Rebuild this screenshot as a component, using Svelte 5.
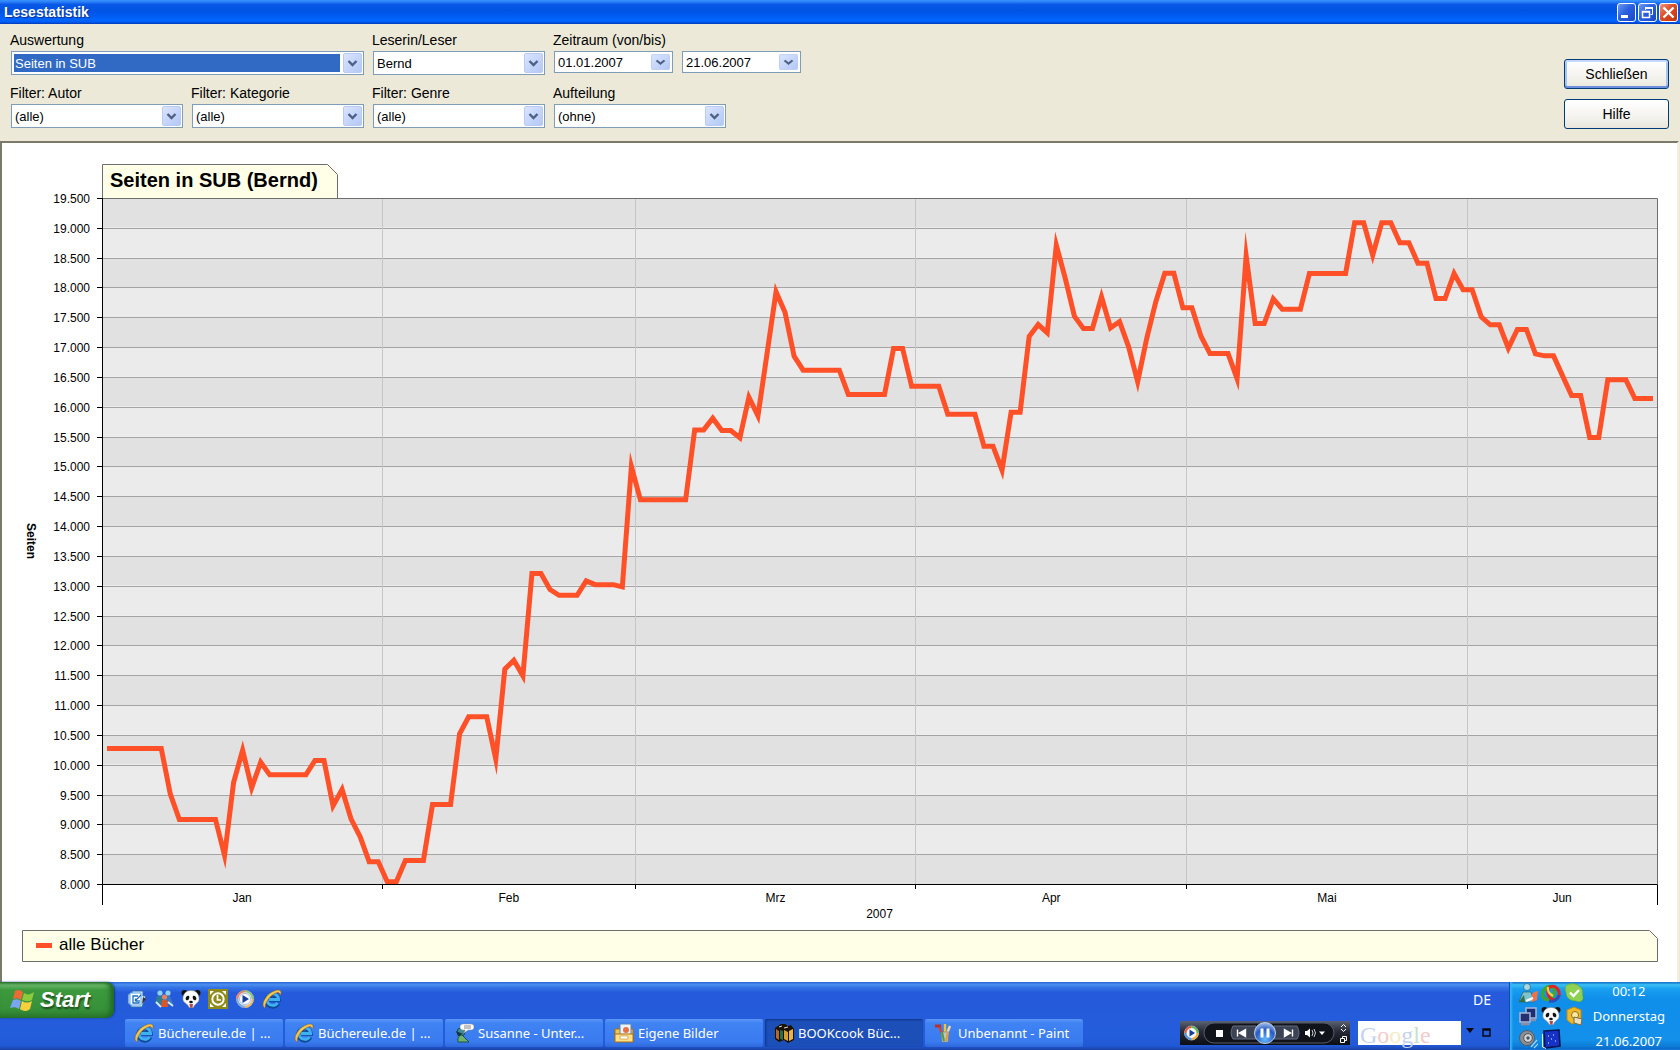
<script lang="ts">
	// [number of days, pages] runs, starting on 1 January
	const runs = [
		[7, 10280], [1, 9514], [5, 9090], [1, 8486], [1, 9710], [1, 10252], [1, 9620], [1, 10050],
		[5, 9838], [2, 10079], [1, 9319], [1, 9593], [1, 9095], [1, 8799], [2, 8380], [2, 8045],
		[3, 8402], [3, 9341], [1, 10526], [3, 10811], [1, 10101], [1, 11610], [1, 11760], [1, 11498],
		[2, 13215], [1, 12945], [3, 12847], [1, 13090], [3, 13027], [1, 12990], [1, 15007], [6, 14448],
		[2, 15621], [1, 15817], [2, 15610], [1, 15487], [1, 16169], [1, 15856], [1, 16896], [1, 17935],
		[1, 17588], [1, 16856], [5, 16622], [5, 16214], [2, 16985], [4, 16353], [4, 15884], [2, 15347],
		[1, 14945], [2, 15917], [1, 17186], [1, 17387], [1, 17247], [1, 18717], [1, 18158], [1, 17527],
		[2, 17320], [1, 17851], [1, 17331], [1, 17437], [1, 17013], [1, 16426], [1, 17152], [1, 17767],
		[2, 18248], [2, 17667], [1, 17192], [3, 16901], [1, 16477], [1, 18538], [2, 17404], [1, 17818],
		[3, 17645], [5, 18243], [2, 19092], [1, 18550], [2, 19092], [2, 18757], [2, 18416], [2, 17823],
		[1, 18243], [2, 17969], [1, 17516], [2, 17382], [1, 16991], [2, 17304], [1, 16896], [2, 16862],
		[1, 16527], [2, 16197], [2, 15493], [3, 16460], [3, 16147]
	];
	const values = runs.flatMap(([n, v]) => Array(n).fill(v));

	const months = [
		{ name: 'Jan', from: 0, to: 31 },
		{ name: 'Feb', from: 31, to: 59 },
		{ name: 'Mrz', from: 59, to: 90 },
		{ name: 'Apr', from: 90, to: 120 },
		{ name: 'Mai', from: 120, to: 151 },
		{ name: 'Jun', from: 151, to: 172 }
	];

	const min = 8000;
	const max = 19500;
	const step = 500;
	const steps = Array.from({ length: (max - min) / step + 1 }, (_, i) => min + i * step);

	let w = $state(1674);
	let h = $state(839);

	const left = 100;
	const top = 55;
	const right = $derived(w - 20);
	const bottom = $derived(h - 98);
	const midX = $derived((left + right) / 2);

	const x = (day: number) => left + (day / values.length) * (right - left);
	const y = (v: number) => bottom - ((v - min) / (max - min)) * (bottom - top);
	// lines sit on pixel centres
	const px = (n: number) => Math.floor(n) + 0.5;

	const points = $derived(values.map((v, i) => `${x(i + 0.5) + 0.5},${y(v) + 0.5}`).join(' '));

	const label = (v: number) => `${Math.floor(v / 1000)}.${String(v % 1000).padStart(3, '0')}`;

	const filters = [
		{ id: 'autor', label: 'Filter: Autor', value: '(alle)' },
		{ id: 'kategorie', label: 'Filter: Kategorie', value: '(alle)' },
		{ id: 'genre', label: 'Filter: Genre', value: '(alle)' },
		{ id: 'aufteilung', label: 'Aufteilung', value: '(ohne)' }
	];

	const tasks = [
		{ icon: 'ie', text: 'Büchereule.de | ...' },
		{ icon: 'ie', text: 'Büchereule.de | ...' },
		{ icon: 'chat', text: 'Susanne - Unter...' },
		{ icon: 'folder', text: 'Eigene Bilder' },
		{ icon: 'books', text: 'BOOKcook Büc...', active: true },
		{ icon: 'paint', text: 'Unbenannt - Paint' }
	];

	const quick = ['desktop', 'people', 'panda', 'clock', 'player', 'ie'];
	const tray = ['person', 'rings', 'check', 'network', 'panda', 'key', 'speaker', 'screen'];
</script>

{#snippet arrow()}
	<svg class="arrow" viewBox="0 0 19 20" preserveAspectRatio="none" aria-hidden="true">
		<rect x="0.5" y="0.5" width="18" height="19" rx="1.5" fill="url(#arrow-bg)" stroke="#b9cbf5" />
		<path d="M5.5 8 L9.5 12 L13.5 8" fill="none" stroke="#4d6185" stroke-width="2.4" />
	</svg>
{/snippet}

{#snippet icon(name: string)}
	<svg class="icon" viewBox="0 0 20 20" aria-hidden="true">
		{#if name === 'ie'}
			<path d="M16 14 A6 6 0 1 1 16.5 10.5 H7" fill="none" stroke="#0b4a94" stroke-width="4.4" />
			<path d="M15.5 13.8 A5.800 5.800 0 1 1 16.5 10.5 H7" fill="none" stroke="#3fb0f2" stroke-width="3" />
			<path d="M3 19 C-2.500 16 4.500 4 13.5 1.5 C18.500 0 20.500 2.500 18 6.5 C18 3.500 16.5 3 14 4 C8 6.500 3 13 3 19Z" fill="#f6c64f" stroke="#8a5c1a" stroke-width="0.5" />
		{:else if name === 'desktop'}
			<path d="M5 2 H16 V7 H19 L15 18 H4 V15 H1 V5 H5Z" fill="#dceafb" stroke="#2c6db5" />
			<path d="M3 4 H14 V16 H3Z" fill="#fff" stroke="#5aa5e8" />
			<path d="M11 7 H6 V14 H12 V11 M8 12 L14 6 M8.500 12 V9.500 M8.500 12 H11" fill="none" stroke="#1f6fc0" stroke-width="1.300" />
			<path d="M16 8 L19 10 L15 15Z" fill="#333" />
		{:else if name === 'people'}
			<circle cx="6" cy="4" r="2.6" fill="#8fd2ee" />
			<circle cx="14" cy="4" r="2.6" fill="#8fd2ee" />
			<path d="M1 14 L3 7 H9 L10 16Z" fill="#2d7d96" />
			<path d="M19 15 L16 7 H11 L10 16Z" fill="#3c78c8" />
			<circle cx="10.5" cy="8" r="2.6" fill="#e9825a" />
			<path d="M7 18 L8 11 H13 L14 18Z" fill="#df5424" />
			<path d="M2 13 L7 18 M14 13 L19 17" stroke="#cce8f5" stroke-width="2" />
		{:else if name === 'panda'}
			<circle cx="3.5" cy="4" r="3" fill="#111" />
			<circle cx="16.5" cy="4" r="3" fill="#111" />
			<path d="M10 1.5 C16 1.5 18.5 6 18 11 C17.5 14 13 15 12.5 18.5 H8 C7.5 15 2.5 14 2 11 C1.5 6 4 1.5 10 1.5Z" fill="#fafafa" stroke="#8b8b8b" stroke-width="0.5" />
			<ellipse cx="6.5" cy="9" rx="1.7" ry="2.4" fill="#111" transform="rotate(25 6.5 9)" />
			<ellipse cx="13.5" cy="9" rx="1.7" ry="2.4" fill="#111" transform="rotate(-25 13.5 9)" />
			<ellipse cx="10" cy="13" rx="1.8" ry="1.3" fill="#111" />
			<path d="M8.5 15 H12 L11.5 18.5 H9Z" fill="#b34a4a" />
		{:else if name === 'clock'}
			<rect width="20" height="20" fill="#8f8a18" />
			<path d="M2 6 L2 2 H6Z M14 2 H18 V6Z M18 14 V18 H14Z M6 18 H2 V14Z" fill="#fff" />
			<circle cx="10" cy="10" r="5.700" fill="#8f8a18" stroke="#fff" stroke-width="2" />
			<path d="M9.5 6 V11 H13" fill="none" stroke="#fff" stroke-width="1.700" />
		{:else if name === 'player'}
			<circle cx="10" cy="10" r="8.7" fill="#e9edf4" stroke="#8b9cb5" stroke-width="0.6" />
			<path d="M10 2.3 A7.7 7.7 0 0 0 2.3 10" fill="none" stroke="#e9836c" stroke-width="2" />
			<path d="M10 2.3 A7.7 7.7 0 0 1 17.7 10" fill="none" stroke="#8cc67c" stroke-width="2" />
			<path d="M17.7 10 A7.7 7.7 0 0 1 10 17.7" fill="none" stroke="#f0b758" stroke-width="2" />
			<path d="M10 17.7 A7.7 7.7 0 0 1 2.3 10" fill="none" stroke="#78a9e2" stroke-width="2" />
			<circle cx="10" cy="10" r="5.6" fill="#f7fbff" stroke="#aac2e2" />
			<path d="M7.5 6 L14 10 L7.5 14Z" fill="#173c9c" />
		{:else if name === 'chat'}
			<circle cx="7" cy="9" r="4" fill="#3f8d93" stroke="#164b58" />
			<path d="M4 19 C3 14 6 12 8 12 L15 19Z" fill="#6db36d" stroke="#1b5147" />
			<path d="M2 8 L9 11 L4 13Z" fill="#17363b" />
			<path d="M9 1 H17 Q20 1 20 4 Q20 7 17 7 H14 L10 10 L11 7 H9 Q6 7 6 4 Q6 1 9 1Z" fill="#fff" stroke="#999" stroke-width="0.5" />
			<path d="M10 3 H17 M10 5 H17" stroke="#666" stroke-width="0.8" />
		{:else if name === 'folder'}
			<path d="M1 6 H6 V2 H17 V6 H19 V18 H1Z" fill="#f2c64c" stroke="#a76f11" />
			<path d="M6 1 H17 V12 H6Z" fill="#e7f3fd" stroke="#5a85b6" />
			<circle cx="12" cy="7" r="3" fill="#e77146" />
			<path d="M1 11 H19 V19 H1Z" fill="#ffe086" stroke="#a76f11" />
			<path d="M6 13 H14 V16 H6Z" fill="#fff" stroke="#b8892d" stroke-width="0.6" />
		{:else if name === 'books'}
			<path d="M1 5 L7 1 H11 L14 3 L17 2 L20 6 V17 L14 20 L10 17 L5 19 L1 16Z" fill="#1b1205" />
			<path d="M2 6 L5 8 V17 L2 15Z" fill="#b4682a" />
			<path d="M6 7 L9 8 V17 L6 16Z" fill="#26704e" />
			<path d="M10 7 L14 9 V18 L10 16Z" fill="#d6a12f" />
			<path d="M15 8 L19 6 V16 L15 18Z" fill="#e5b54a" />
			<path d="M5 4 L8 3 M10 5 L14 4" stroke="#ddd" />
		{:else if name === 'paint'}
			<path d="M5 3 L9 13" stroke="#d94327" stroke-width="2.4" />
			<path d="M11 1 V13" stroke="#f1c232" stroke-width="2.4" />
			<path d="M16 3 L12 13" stroke="#f0d9a0" stroke-width="2.4" />
			<path d="M7 9 H15 L14 19 H8Z" fill="#b9c7c9" stroke="#6c7680" stroke-width="0.6" />
			<path d="M8 9 L10 18" stroke="#4d9b46" stroke-width="2" />
			<path d="M14 9 L12 18" stroke="#e89a2b" stroke-width="2" />
			<path d="M1 3 H7" stroke="#b3322a" stroke-width="3" />
		{:else if name === 'person'}
			<circle cx="9" cy="4" r="3.5" fill="#a5d7e6" stroke="#246078" stroke-width="0.7" />
			<path d="M1 19 L5 9 H13 L16 19Z" fill="#7dc4cf" stroke="#246078" stroke-width="0.7" />
			<path d="M1 19 L6 12 L7 19Z" fill="#356f42" />
			<path d="M14 19 V11 L16 9 L20 8 L19 17Z" fill="#ee7348" />
			<path d="M8 18 L15 15" stroke="#fff" stroke-width="2" />
		{:else if name === 'rings'}
			<ellipse cx="7.5" cy="10" rx="5.500" ry="7" fill="none" stroke="#3fa535" stroke-width="3.4" transform="rotate(35 7.5 10)" />
			<ellipse cx="12.5" cy="10" rx="5.500" ry="7" fill="none" stroke="#d92727" stroke-width="3" transform="rotate(-20 12.5 10)" />
			<path d="M18 12 A8 8 0 0 1 8 18" fill="none" stroke="#2b4fbb" stroke-width="3" />
			<path d="M7 4 C6 9 9 11 12 13" fill="none" stroke="#eed33b" stroke-width="2.400" />
		{:else if name === 'check'}
			<path d="M6 1 C8 0 13 1 15 3 C20 6 18 10 19 14 C20 18 15 20 12 18 C6 18 2 15 2 9 C0 5 2 1 6 1Z" fill="#8ed052" stroke="#5ea62d" stroke-width="0.6" />
			<path d="M6 9.5 L9.5 13 L15 7" fill="none" stroke="#fff" stroke-width="2.4" />
		{:else if name === 'network'}
			<path d="M8 2 H18 V12 H8Z" fill="#1d2f74" stroke="#a9b6d4" stroke-width="1.500" />
			<path d="M2 7 H12 V16 H2Z" fill="#253070" stroke="#a9b6d4" stroke-width="1.500" />
			<path d="M3 18 H12 M13 14 H18" stroke="#888eaa" stroke-width="2.4" />
		{:else if name === 'key'}
			<path d="M3 4 L10 1 L17 4 V15 L8 18 L3 14Z" fill="#f0b926" stroke="#b98a20" />
			<circle cx="11" cy="9" r="3.500" fill="#ffe9a1" stroke="#8b6f26" />
			<path d="M10 11 L18 13 L17 19 L10 17Z" fill="#e8e0c0" stroke="#7a6a40" />
		{:else if name === 'speaker'}
			<circle cx="9" cy="9" r="7.5" fill="#8a8d92" stroke="#545d65" />
			<circle cx="10" cy="9" r="4.3" fill="#d1d6da" stroke="#4b5359" />
			<circle cx="10" cy="9" r="1.7" fill="#4b5359" />
			<path d="M13 18 L19 11 M16 19 L20 15" stroke="#9ed7ff" stroke-width="1.2" />
		{:else if name === 'screen'}
			<path d="M3 2 L18 1 L19 17 L4 19Z" fill="#1533c8" stroke="#071556" stroke-width="1.6" />
			<path d="M1.5 5 V18 L5 19.500" fill="none" stroke="#e8f2ff" />
			<path d="M7 7 H8 M12 6 H13 M10 10 H11 M14 12 H15 M7 14 H8" stroke="#fff" stroke-width="1.2" />
		{/if}
	</svg>
{/snippet}

<svg class="defs" aria-hidden="true">
	<defs>
		<linearGradient id="arrow-bg" x1="0" y1="0" x2="1" y2="1">
			<stop offset="0" stop-color="#dbe5fe" />
			<stop offset="1" stop-color="#b2c7f6" />
		</linearGradient>
	</defs>
</svg>

<div class="desktop">
	<header class="titlebar">
		<h1>Lesestatistik</h1>
		<div class="window-buttons">
			<button aria-label="Minimieren">
				<svg viewBox="0 0 17 17"><path d="M3 12.5 H10" stroke="#fff" stroke-width="3" /></svg>
			</button>
			<button aria-label="Wiederherstellen">
				<svg viewBox="0 0 17 17" fill="none" stroke="#fff">
					<path d="M6.5 6 V3.5 H13.5 V10.5 H11.5" />
					<path d="M6 4 H14" stroke-width="2" />
					<path d="M3.500 7.5 H10.500 V13.5 H3.500Z M3 8 H11" stroke-width="1.5" />
				</svg>
			</button>
			<button class="close" aria-label="Fenster schließen">
				<svg viewBox="0 0 17 17"><path d="M3.5 3.5 L13.5 13.5 M13.5 3.5 L3.5 13.5" stroke="#fff" stroke-width="2.4" /></svg>
			</button>
		</div>
	</header>

	<form class="toolbar" onsubmit={(e) => e.preventDefault()}>
		<div class="fields">
			<div class="field wide">
				<label for="auswertung">Auswertung</label>
				<div class="combo">
					<select id="auswertung" class="selected"><option>Seiten in SUB</option></select>
					{@render arrow()}
				</div>
			</div>
			<div class="field">
				<label for="leser">Leserin/Leser</label>
				<div class="combo">
					<select id="leser"><option>Bernd</option></select>
					{@render arrow()}
				</div>
			</div>
			<div class="field range">
				<label for="von">Zeitraum (von/bis)</label>
				<div class="dates">
					<div class="combo date">
						<input id="von" type="text" value="01.01.2007" />
						{@render arrow()}
					</div>
					<div class="combo date">
						<input type="text" value="21.06.2007" aria-label="Zeitraum bis" />
						{@render arrow()}
					</div>
				</div>
			</div>
			{#each filters as f (f.id)}
				<div class="field">
					<label for={f.id}>{f.label}</label>
					<div class="combo">
						<select id={f.id}><option>{f.value}</option></select>
						{@render arrow()}
					</div>
				</div>
			{/each}
		</div>
		<div class="actions">
			<button class="push default">Schließen</button>
			<button class="push">Hilfe</button>
		</div>
	</form>

	<main class="panel">
		<div class="chart" bind:clientWidth={w} bind:clientHeight={h}>
			<svg width={w} height={h} role="img" aria-label="Seiten in SUB (Bernd)">
				{#each steps.slice(1) as v, i (v)}
					<rect
						x={left}
						y={px(y(v))}
						width={right - left}
						height={px(y(v - step)) - px(y(v))}
						fill={i % 2 ? '#ebebeb' : '#e1e1e1'}
					/>
				{/each}
				{#each steps.slice(1, -1) as v (v)}
					<line class="grid" x1={left} x2={right} y1={px(y(v) + 0.5)} y2={px(y(v) + 0.5)} />
				{/each}
				{#each months.slice(1) as m (m.name)}
					<line class="grid-month" x1={px(x(m.from))} x2={px(x(m.from))} y1={top} y2={bottom} />
					<line class="axis" x1={px(x(m.from))} x2={px(x(m.from))} y1={bottom} y2={bottom + 5} />
				{/each}

				<path class="tab" d="M{px(left)} {px(top)} V{px(top - 34)} h225 l10 10 V{px(top)}" />
				<text class="title" x={left + 8} y={top - 11}>Seiten in SUB (Bernd)</text>

				<polyline class="series" {points} />

				<path class="frame" d="M{left} {px(top)} H{px(right)} V{bottom}" />
				<path class="axis" d="M{px(left)} {top} V{bottom + 21} M{left} {px(bottom)} H{px(right)} V{bottom + 21}" />
				{#each steps as v (v)}
					<line class="axis" x1={left - 5} x2={left} y1={px(y(v) + 0.5)} y2={px(y(v) + 0.5)} />
					<text class="tick" x={left - 12} y={Math.round(y(v)) + 5} text-anchor="end">{label(v)}</text>
				{/each}
				{#each months as m (m.name)}
					<text class="tick" x={x((m.from + m.to) / 2)} y={bottom + 18} text-anchor="middle">{m.name}</text>
				{/each}
				<text class="tick" x={midX} y={bottom + 34} text-anchor="middle">2007</text>
				<text
					class="unit"
					transform="translate(25 {(top + bottom) / 2}) rotate(90)"
					text-anchor="middle">Seiten</text
				>

				<path class="tab" d="M20.5 {bottom + 46.5} H{right - 7.5} l8 8 V{bottom + 77.5} H20.5Z" />
				<rect x="34" y={bottom + 59} width="16" height="5" fill="#ff5028" />
				<text class="legend" x="57" y={bottom + 66}>alle Bücher</text>
			</svg>
		</div>
	</main>

	<footer class="taskbar">
		<div class="start-cell">
			<button class="start">
				<svg viewBox="0 0 24 24" aria-hidden="true">
					<path d="M5 3 C8 1 10 2 13 4 L11 12 C8 10 6 10 3 11Z" fill="#ee6a34" />
					<path d="M14 5 C17 7 20 7 24 4 L22 12 C18 14 15 13 12 12Z" fill="#8ccb3c" />
					<path d="M3 12 C6 11 8 11 11 13 L9 21 C6 19 4 19 0 20Z" fill="#7ba4f4" />
					<path d="M12 13 C15 15 18 15 22 13 L20 21 C17 24 12 23 10 21Z" fill="#f8cf3c" />
				</svg>
				Start
			</button>
		</div>
		<div class="bands">
			<div class="quick">
				{#each quick as name (name)}
					<button aria-label={name}>{@render icon(name)}</button>
				{/each}
				<span class="lang">DE</span>
			</div>
			<div class="tasks">
				{#each tasks as t}
					<button class="task" class:active={t.active}>
						{@render icon(t.icon)}<span>{t.text}</span>
					</button>
				{/each}
				<div class="player">
					<svg viewBox="0 0 170 24" aria-hidden="true">
						<defs>
							<linearGradient id="player-bg" x1="0" y1="0" x2="0" y2="1">
								<stop offset="0" stop-color="#5b6273" />
								<stop offset="0.45" stop-color="#262a35" />
								<stop offset="1" stop-color="#0c0e14" />
							</linearGradient>
							<radialGradient id="pause-bg" cx="0.5" cy="0.8" r="0.8">
								<stop offset="0" stop-color="#62b8fa" />
								<stop offset="0.6" stop-color="#2a5bc4" />
								<stop offset="1" stop-color="#a9c5ee" />
							</radialGradient>
						</defs>
						<rect width="170" height="24" fill="url(#player-bg)" />
						<rect x="24" y="2" width="130" height="20" rx="10" fill="#11131a" stroke="#555c6b" />
						<circle cx="11.5" cy="12" r="7" fill="#f4f7fb" stroke="#9bb0cc" />
						<path d="M11.5 6 A6 6 0 0 0 5.5 12" fill="none" stroke="#e8553a" stroke-width="2" />
						<path d="M11.5 6 A6 6 0 0 1 17.5 12" fill="none" stroke="#63b74c" stroke-width="2" />
						<path d="M17.5 12 A6 6 0 0 1 11.5 18" fill="none" stroke="#f0ad35" stroke-width="2" />
						<path d="M5.5 12 A6 6 0 0 0 11.5 18" fill="none" stroke="#4f94df" stroke-width="2" />
						<path d="M9.5 8.5 L15 12 L9.5 15.5Z" fill="#173c9c" />
						<rect x="36" y="9" width="7" height="7" fill="#fff" />
						<path d="M53 5 H76 V18 H53 Q49 12 53 5Z M94 5 H117 Q121 12 117 18 H94Z" fill="#3b4354" stroke="#656e80" />
						<path d="M57.5 8.5 V15.5 M65.5 8.5 L59.5 12 L65.5 15.5Z" fill="#fff" stroke="#fff" stroke-width="1.4" />
						<path d="M112.5 8.5 V15.5 M104.5 8.5 L110.5 12 L104.5 15.5Z" fill="#fff" stroke="#fff" stroke-width="1.4" />
						<circle cx="85" cy="12" r="10.5" fill="url(#pause-bg)" stroke="#b9cdec" />
						<path d="M82 7.5 V16.5 M88 7.5 V16.5" stroke="#fff" stroke-width="3" />
						<path d="M125 10 H127 L130 7.5 V16.5 L127 14 H125Z" fill="#fff" />
						<path d="M132 9 Q134 12 132 15 M134 8 Q137 12 134 16" fill="none" stroke="#ccc" />
						<path d="M139 10.5 H145 L142 14Z" fill="#fff" />
						<path d="M161 6 L163.5 3.5 L166 6 M161 8 L163.5 10.5 L166 8" fill="none" stroke="#fff" />
						<path d="M160.5 17.5 H164.5 V21.5 H160.5Z M162.5 17 V15.5 H166.5 V19.5 H165" fill="none" stroke="#fff" />
					</svg>
				</div>
				<div class="search">
					<input type="text" aria-label="Google" />
					<span class="google" aria-hidden="true"
						><b>G</b><b>o</b><b>o</b><b>g</b><b>l</b><b>e</b></span
					>
				</div>
				<svg class="search-tools" viewBox="0 0 26 16" aria-hidden="true">
					<path d="M1 3 H9 L5 8Z" fill="#06070c" />
					<path d="M18 4 H25 V11 H18Z M18 5 H25" fill="none" stroke="#06070c" stroke-width="1.4" />
				</svg>
			</div>
		</div>
		<div class="tray">
			<div class="tray-icons">
				{#each tray as name (name)}
					{@render icon(name)}
				{/each}
			</div>
			<div class="clock">
				<span>00:12</span>
				<span>Donnerstag</span>
				<span>21.06.2007</span>
			</div>
		</div>
	</footer>
</div>

<style>
	:global(body) {
		background: #ece9d8;
	}

	button,
	select,
	input {
		margin: 0;
		padding: 0;
		border: 0;
		font: inherit;
		color: inherit;
	}

	.defs {
		position: absolute;
		width: 0;
		height: 0;
	}

	.desktop {
		display: flex;
		flex-direction: column;
		height: 100vh;
		min-height: 600px;
		font-family: 'Liberation Sans', Arial, sans-serif;
		font-size: 14px;
		color: #000;
	}

	.titlebar {
		display: flex;
		align-items: center;
		justify-content: space-between;
		height: 24px;
		padding: 0 2px 0 4px;
		box-sizing: border-box;
		background: linear-gradient(#3a94ff 0, #2a80f8 8%, #0a58e6 18%, #0054e3 45%, #0058ee 60%, #0066ff 85%, #0059f0 92%, #003bb8 100%);
	}

	.titlebar h1 {
		margin: 0;
		font-size: 14px;
		line-height: 24px;
		color: #fff;
		text-shadow: 1px 1px 1px #0a2f8c;
	}

	.window-buttons {
		display: flex;
		gap: 2px;
	}

	.window-buttons button {
		width: 19px;
		height: 19px;
		border: 1px solid #fff;
		border-radius: 3px;
		background: linear-gradient(135deg, #6d9cf5, #2a5fe0 45%, #1a48c8);
	}

	.window-buttons .close {
		background: linear-gradient(135deg, #f0957a, #dd4d26 45%, #bf3410);
	}

	.window-buttons svg {
		display: block;
		width: 17px;
		height: 17px;
	}

	.toolbar {
		display: flex;
		justify-content: space-between;
		padding: 8px 11px 12px 10px;
		background: #ece9d8;
	}

	.fields {
		display: grid;
		grid-template-columns: repeat(4, 173px) 68px;
		align-content: start;
		gap: 10px 8px;
		margin-bottom: 1px;
	}

	.wide,
	.range {
		grid-column: span 2;
	}

	label {
		display: block;
		line-height: 17px;
		margin-bottom: 2px;
	}

	.combo {
		display: flex;
		gap: 2px;
		height: 24px;
		margin-left: 1px;
		padding: 1px;
		box-sizing: border-box;
		border: 1px solid #7f9db9;
		background: #fff;
		font-size: 13px;
	}

	.combo select,
	.combo input {
		flex: 1;
		min-width: 0;
		margin: 1px;
		padding-left: 1px;
		appearance: none;
		border-radius: 0;
		background: transparent;
		outline: none;
	}

	.combo .selected {
		background: #316ac5;
		color: #fff;
	}

	.arrow {
		width: 19px;
		height: 100%;
	}

	.dates {
		display: flex;
		gap: 8px;
	}

	.date {
		width: 119px;
		height: 22px;
		padding: 2px;
	}

	.date input {
		margin: 0;
	}

	.actions {
		display: flex;
		flex-direction: column;
		justify-content: flex-end;
		gap: 10px;
	}

	.push {
		width: 105px;
		height: 30px;
		border: 1px solid #003c74;
		border-radius: 3px;
		background: linear-gradient(#fff, #f4f3ee 60%, #e8e6dc);
	}

	.default {
		box-shadow: inset 0 2px #c3d8fa, inset 0 -2px #6d8fdd, inset 2px 0 #a9c3f3, inset -2px 0 #a9c3f3;
	}

	.panel {
		display: flex;
		flex: 1;
		min-height: 0;
		margin-right: 1px;
		border: solid #7b7969;
		border-width: 2px 2px 0;
		border-right-color: #f1efe2;
		background: #fff;
	}

	.chart {
		flex: 1;
		min-width: 0;
		overflow: hidden;
	}

	.chart svg {
		display: block;
	}

	.grid {
		stroke: #a4a4a4;
	}

	.grid-month {
		stroke: #c6c6c6;
	}

	.axis {
		fill: none;
		stroke: #000;
	}

	.frame {
		fill: none;
		stroke: #6e6e6e;
	}

	.tab {
		fill: #ffffe8;
		stroke: #6e6e6e;
	}

	.series {
		fill: none;
		stroke: #ff5028;
		stroke-width: 5;
		stroke-miterlimit: 20;
	}

	.tick {
		font-size: 12px;
	}

	.title {
		font-size: 20px;
		font-weight: bold;
	}

	.unit {
		font-size: 12px;
		font-weight: bold;
	}

	.legend {
		font-size: 17px;
	}

	.taskbar {
		display: flex;
		height: 68px;
		font-family: 'Noto Sans', Tahoma, sans-serif;
		font-size: 13px;
		color: #fff;
		background: linear-gradient(#2a66d8 0, #4a90ee 4%, #3574e4 8%, #245adb 16%, #245ddb 80%, #2158d4 94%, #1941a5 100%);
	}

	.start-cell {
		width: 125px;
	}

	.start {
		display: flex;
		align-items: center;
		gap: 6px;
		width: 114px;
		height: 36px;
		padding: 0 0 0 10px;
		border-radius: 0 8px 8px 0;
		background: linear-gradient(#2f7d2f 0, #6cb96c 8%, #3c993c 22%, #37913a 75%, #2b7a2d 100%);
		box-shadow: inset -4px 0 5px #1f6a24, 1px 0 2px #17398f;
		font: italic bold 22px 'Liberation Sans', Arial, sans-serif;
		text-shadow: 1px 2px 2px #1c4a1c;
	}

	.start svg {
		width: 24px;
		height: 24px;
	}

	.bands {
		display: flex;
		flex: 1;
		min-width: 0;
		flex-direction: column;
		gap: 3px;
	}

	.quick {
		display: flex;
		align-items: center;
		gap: 7px;
		height: 34px;
		padding: 0 18px 0 2px;
	}

	.quick button {
		display: flex;
		background: none;
	}

	.icon {
		flex: none;
		width: 20px;
		height: 20px;
	}

	.lang {
		margin-left: auto;
		font-size: 14px;
	}

	.tasks {
		display: flex;
		align-items: center;
		gap: 2px;
	}

	.task {
		display: flex;
		align-items: center;
		gap: 4px;
		flex: 0 1 158px;
		min-width: 0;
		height: 28px;
		padding: 0 9px;
		border-radius: 2px;
		background: linear-gradient(#5b96f7 0, #3f83f3 15%, #3a7bf0 80%, #2f68dc 100%);
		white-space: nowrap;
		overflow: hidden;
	}

	.active {
		background: #1c4fb8;
		box-shadow: inset 1px 1px 2px #0f3488;
	}

	.player {
		flex: none;
		width: 170px;
		height: 24px;
		margin-left: auto;
	}

	.player svg {
		display: block;
	}

	.search {
		position: relative;
		flex: none;
		width: 103px;
		height: 24px;
		margin-left: 6px;
	}

	.search input {
		width: 100%;
		height: 100%;
		background: #fff;
	}

	.google {
		position: absolute;
		inset: 0 2px;
		font: 24px/28px 'Liberation Serif', 'Times New Roman', serif;
		pointer-events: none;
	}

	.google b {
		font-weight: normal;
		color: #c3d3ee;
	}

	.google b:nth-child(2),
	.google b:nth-child(6) {
		color: #f3cccc;
	}

	.google b:nth-child(3) {
		color: #f5ecc4;
	}

	.google b:nth-child(5) {
		color: #c6e2c8;
	}

	.search-tools {
		flex: none;
		width: 26px;
		height: 16px;
		margin: 0 18px 0 2px;
	}

	.tray {
		display: flex;
		justify-content: space-between;
		width: 171px;
		padding: 0 15px 0 8px;
		box-sizing: border-box;
		border-left: 1px solid #0c4fa8;
		background: linear-gradient(#0c59b9 0, #3ac0f6 4%, #18a0f0 10%, #0f8eea 25%, #1290ea 85%, #0d7bd6 95%, #095bc9 100%);
		box-shadow: inset 2px 0 2px #35b4f4;
	}

	.tray-icons {
		display: grid;
		grid-template-columns: repeat(3, 20px);
		align-content: center;
		gap: 3px;
	}

	.clock {
		display: flex;
		flex-direction: column;
		justify-content: center;
		text-align: center;
		line-height: 25px;
		overflow: hidden;
	}
</style>
